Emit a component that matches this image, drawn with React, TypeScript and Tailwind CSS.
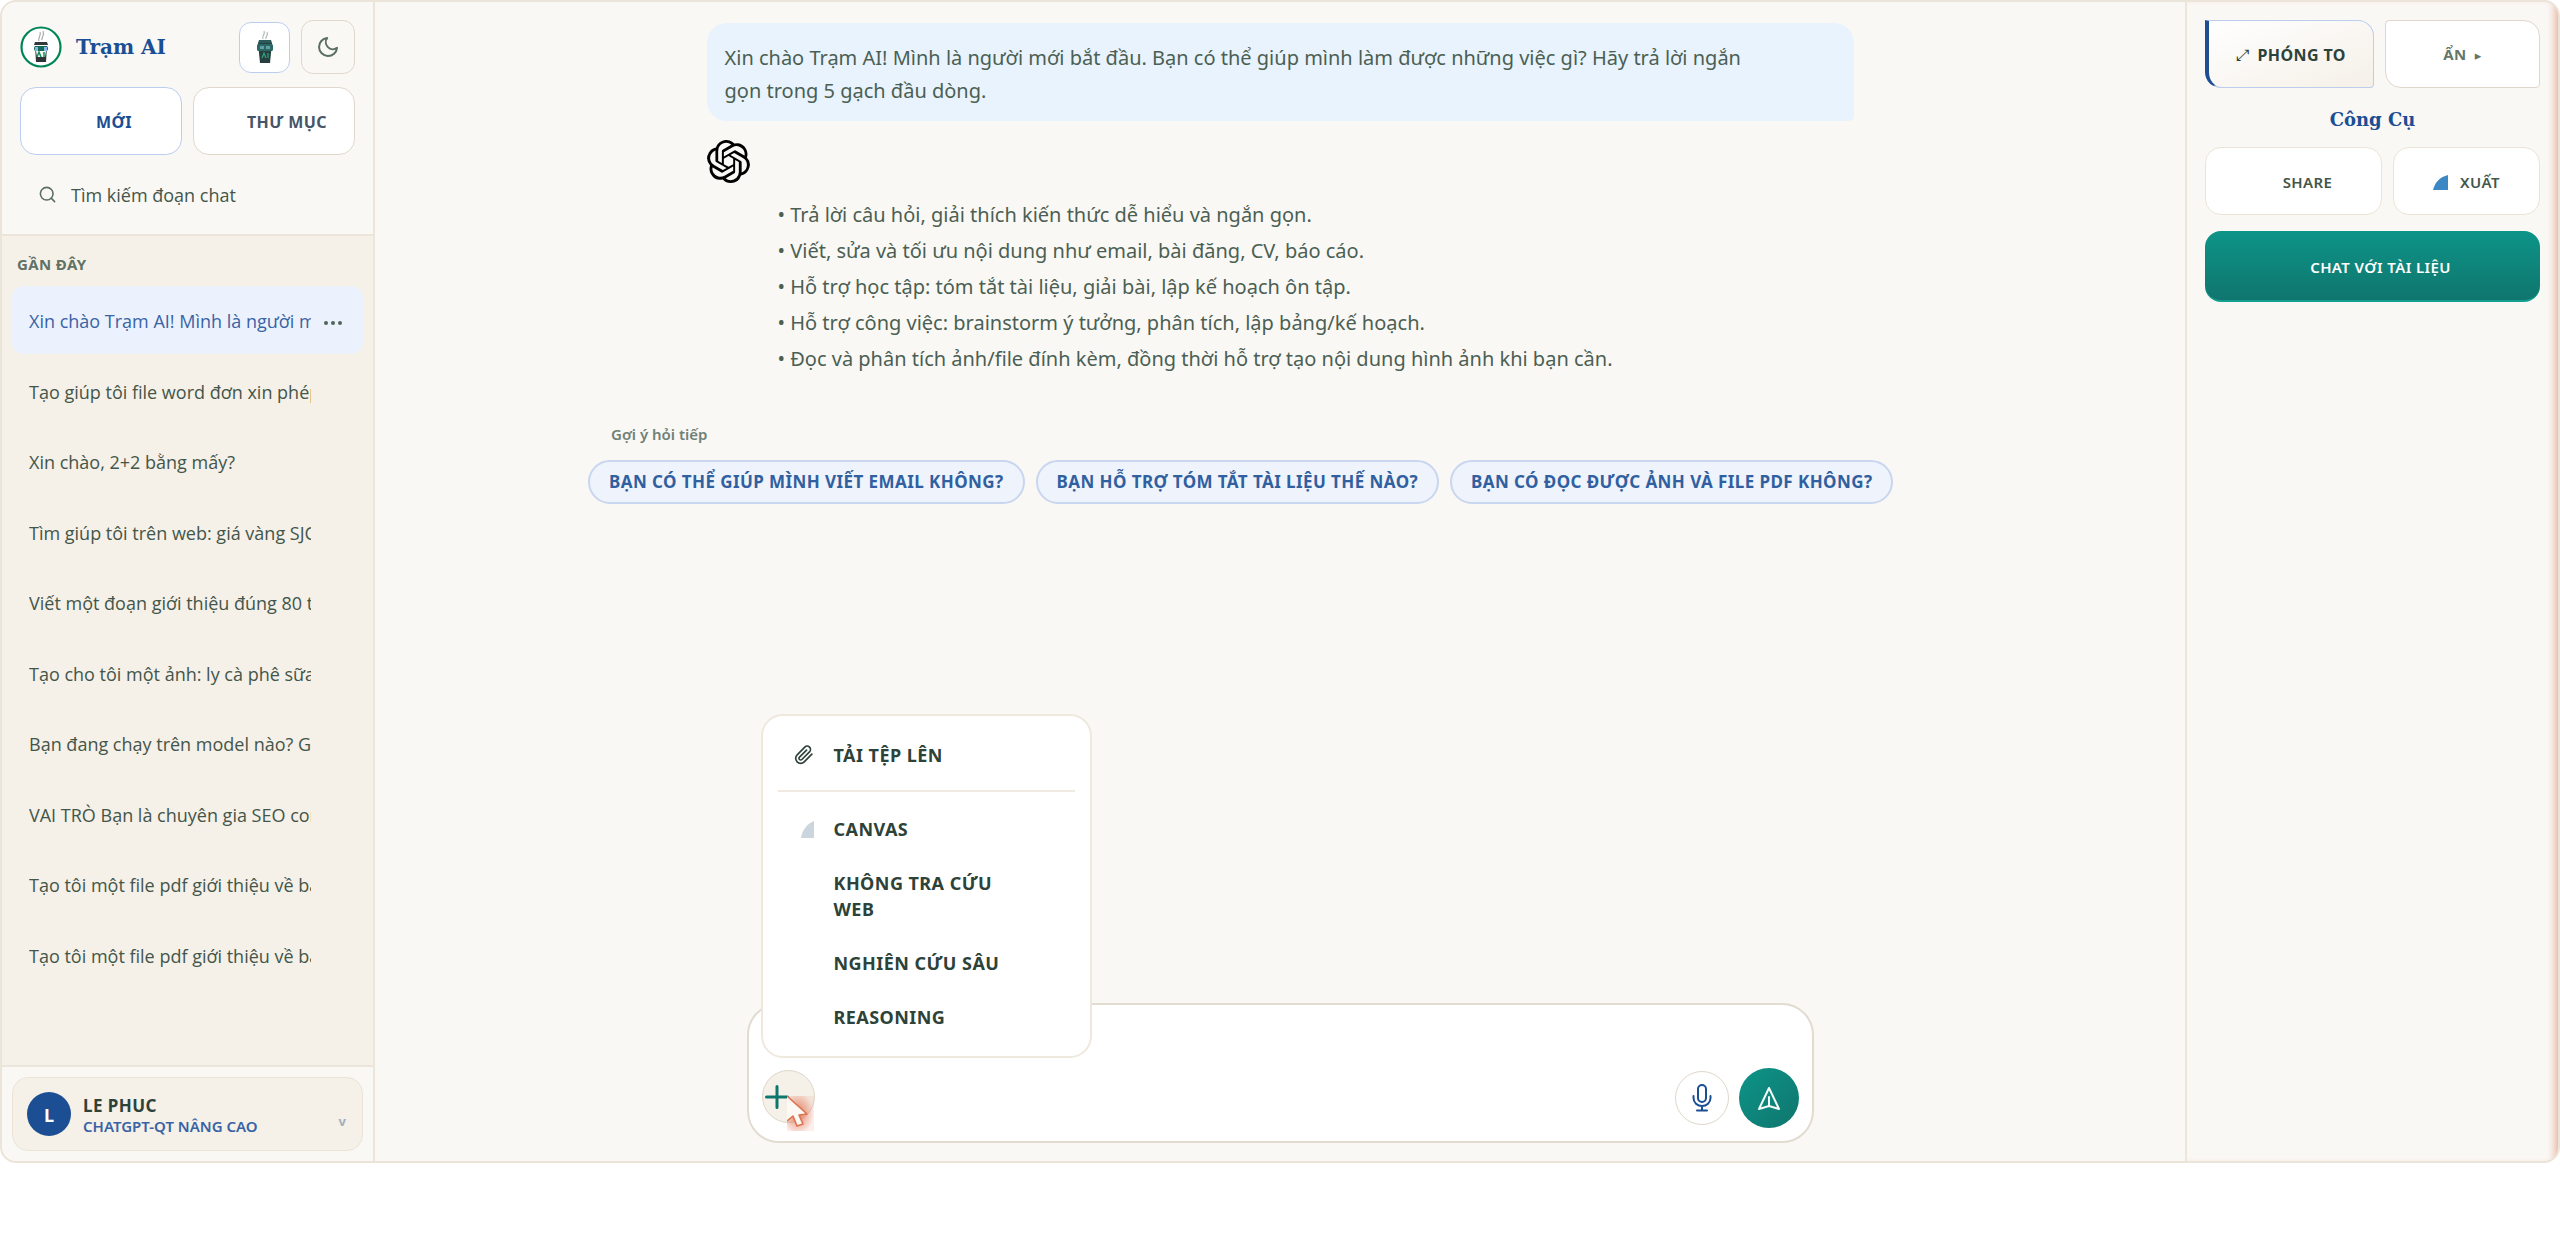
import { type FC, type ReactNode } from "react";
import { FiMoon, FiPaperclip, FiSearch } from "react-icons/fi";
import { SiOpenai } from "react-icons/si";

type ChildrenProps = { children: ReactNode };

const chats = [
  "Xin chào Trạm AI! Mình là người mới bắt đầu",
  "Tạo giúp tôi file word đơn xin phép nghỉ",
  "Xin chào, 2+2 bằng mấy?",
  "Tìm giúp tôi trên web: giá vàng SJC hôm nay",
  "Viết một đoạn giới thiệu đúng 80 từ",
  "Tạo cho tôi một ảnh: ly cà phê sữa đá",
  "Bạn đang chạy trên model nào? Giới thiệu",
  "VAI TRÒ Bạn là chuyên gia SEO content",
  "Tạo tôi một file pdf giới thiệu về bản thân",
  "Tạo tôi một file pdf giới thiệu về bản thân",
];

const answers = [
  "Trả lời câu hỏi, giải thích kiến thức dễ hiểu và ngắn gọn.",
  "Viết, sửa và tối ưu nội dung như email, bài đăng, CV, báo cáo.",
  "Hỗ trợ học tập: tóm tắt tài liệu, giải bài, lập kế hoạch ôn tập.",
  "Hỗ trợ công việc: brainstorm ý tưởng, phân tích, lập bảng/kế hoạch.",
  "Đọc và phân tích ảnh/file đính kèm, đồng thời hỗ trợ tạo nội dung hình ảnh khi bạn cần.",
];

const suggestions = [
  "BẠN CÓ THỂ GIÚP MÌNH VIẾT EMAIL KHÔNG?",
  "BẠN HỖ TRỢ TÓM TẮT TÀI LIỆU THẾ NÀO?",
  "BẠN CÓ ĐỌC ĐƯỢC ẢNH VÀ FILE PDF KHÔNG?",
];

const Cup: FC<{ className: string }> = ({ className }) => (
  <svg viewBox="0 0 20 36" className={className} fill="none" aria-hidden="true">
    <path d="M8 10c-2-3 3-4 1-8M11 10c-1-3 3-3 1-7" stroke="#aeb9b7" strokeWidth="1.2" />
    <path d="M4 11h12l1 3H3z" fill="#2c5a5a" />
    <path d="M3 14h14l-2 20H5z" fill="#26403f" />
    <path d="M2 17c0-2 1-2 2-2h12c1 0 2 0 2 2v3c0 2-1 2-2 2H4c-1 0-2 0-2-2z" fill="#2b6763" />
    <path d="M5 17h4v3H5zM11 17h4v3h-4z" fill="#5f9fa5" />
    <path d="M7 29l2-5 2 5M13 24v5" stroke="#2fa37e" strokeWidth="1.2" />
  </svg>
);

const Logo = () => (
  <svg viewBox="0 0 42 42" className="size-[42px]" fill="none" aria-hidden="true">
    <circle cx="21" cy="21" r="19.5" fill="#fff" stroke="#008556" strokeWidth="2.2" />
    <path d="M19 15c-2-3 3-5 1-9M22 14c-1-3 3-4 1-9" stroke="#a9a9a9" strokeWidth="1.2" />
    <path d="M15 16h12l1 3H14z" fill="#33383b" />
    <path d="M15 20h12l-1 16H16z" fill="#2d3336" />
    <rect x="14" y="20" width="14" height="5" rx="2" fill="#186a58" />
    <path d="M15 21h3v4h-3zM24 21h3v4h-3z" fill="#86b6ea" />
    <path d="M16 25h10l-1 6h-8z" fill="#f4f7f5" />
    <path d="M17 31l2-5 2 5M24 26v5" stroke="#168a5c" strokeWidth="1.5" />
  </svg>
);

const MenuItem: FC<ChildrenProps & { icon?: ReactNode }> = ({ icon, children }) => (
  <button type="button" role="menuitem" className="flex w-full items-center gap-5 px-4 py-[14px] text-left text-[18px] leading-[26px] font-bold tracking-wide text-[#2d4238]">
    <span className="flex w-5 shrink-0 justify-end">{icon}</span>
    <span className="max-w-[200px]">{children}</span>
  </button>
);

const Sidebar = () => (
  <aside className="flex w-[373px] shrink-0 flex-col border-r-2 border-[#ebe5da]">
    <div className="flex h-[234px] flex-col border-b-2 border-[#ebe5da] px-[18px] pt-[18px]">
      <div className="flex h-[54px] items-center">
        <Logo />
        <h1 className="ml-[14px] flex-1 font-['DejaVu_Serif','Liberation_Serif',serif] text-[20px] font-bold text-[#1b4e93]">Trạm AI</h1>
        <button type="button" aria-label="Trạm AI" className="mr-[11px] flex size-[51px] items-center justify-center rounded-xl border border-[#bccdee] bg-white">
          <Cup className="h-9 w-5" />
        </button>
        <button type="button" aria-label="Giao diện tối" className="flex size-[54px] items-center justify-center rounded-xl border border-[#dfd7c9]">
          <FiMoon size={24} className="text-[#5a6e62]" />
        </button>
      </div>
      <div className="mt-[13px] grid grid-cols-2 gap-[11px] text-base font-bold">
        <button type="button" className="h-[68px] rounded-2xl border border-[#bccdee] bg-white pt-[2px] pl-[26px] tracking-wide text-[#1b4e93]">MỚI</button>
        <button type="button" className="h-[68px] rounded-2xl border border-[#dfd7c9] bg-white pt-[2px] pl-[26px] tracking-wide text-[#475569]">THƯ MỤC</button>
      </div>
      <label className="mt-[25px] flex items-center pl-[18px]">
        <FiSearch size={19} className="text-[#5a6e62]" />
        <input
          type="search"
          placeholder="Tìm kiếm đoạn chat"
          className="ml-[14px] w-60 bg-transparent pt-[2px] font-['Open_Sans',sans-serif] text-[18px] text-[#43564a] outline-none placeholder:text-[#43564a]"
        />
      </label>
    </div>
    <nav className="flex-1 bg-[#f5f0e8] px-[10px] pt-4">
      <h2 className="pl-[5px] text-[15px] leading-6 font-bold tracking-wide text-[#5f7266]">GẦN ĐÂY</h2>
      <ul className="mt-[10px] flex h-[703px] flex-col justify-between">
        {chats.map((chat, i) => (
          <li
            key={i}
            className={i === 0 ? "flex h-[68px] items-center rounded-xl bg-[#ebf2fd] pt-[2px] pl-[17px] text-[#3963a5]" : "flex h-[68px] items-center pt-[2px] pl-[17px] text-[#43564a]"}
          >
            <a href="#" className="w-[282px] overflow-hidden font-['Open_Sans',sans-serif] text-[18px] leading-7 whitespace-nowrap">{chat}</a>
            {i === 0 && (
              <button type="button" aria-label="Tùy chọn" className="ml-[13px] flex gap-[3px] pt-1">
                <span className="size-1 rounded-full bg-[#52655a]" />
                <span className="size-1 rounded-full bg-[#52655a]" />
                <span className="size-1 rounded-full bg-[#52655a]" />
              </button>
            )}
          </li>
        ))}
      </ul>
    </nav>
    <div className="border-t-2 border-[#ebe5da] p-[10px]">
      <button type="button" className="flex h-[74px] w-full items-center rounded-2xl border border-[#ebe4d6] bg-[#f5f0e8] pr-4 pl-[14px] text-left">
        <span className="flex size-11 items-center justify-center rounded-full bg-[#1b4e93] pt-[2px] text-[18px] font-bold text-white">L</span>
        <span className="ml-3 flex-1 pt-1">
          <span className="block text-[17px] leading-5 font-bold tracking-wide text-[#2d4238]">LE PHUC</span>
          <span className="block text-[15px] leading-5 font-semibold text-[#3963a5]">CHATGPT-QT NÂNG CAO</span>
        </span>
        <span className="pt-4 text-[13px] font-bold text-[#a3aebb]">v</span>
      </button>
    </div>
  </aside>
);

const AddMenu = () => (
  <div role="menu" className="absolute bottom-[83px] left-3 w-[331px] rounded-[22px] border-2 border-[#eee8dd] bg-white px-[15px] py-3">
    <MenuItem icon={<FiPaperclip size={22} />}>TẢI TỆP LÊN</MenuItem>
    <hr className="mt-2 mb-[10px] border-t-2 border-[#f0eae3]" />
    <MenuItem
      icon={
        <svg viewBox="0 0 13 17" className="h-[17px] w-[13px]" fill="#cbd5dd" aria-hidden="true">
          <path d="M0 17C1 9 6 3 13 0v17z" />
        </svg>
      }
    >
      CANVAS
    </MenuItem>
    <MenuItem>KHÔNG TRA CỨU WEB</MenuItem>
    <MenuItem>NGHIÊN CỨU SÂU</MenuItem>
    <MenuItem>REASONING</MenuItem>
  </div>
);

const Composer = () => (
  <form className="relative mx-auto mt-auto mb-[18px] flex h-[140px] w-full max-w-[1067px] items-end rounded-[32px] border-2 border-[#e2dbd0] bg-white px-[13px] pb-[13px]">
    <AddMenu />
    <button type="button" aria-label="Thêm" className="relative mb-[5px] flex size-[53px] items-center rounded-full border border-[#ddd6c9] bg-[#f5f0e8] pl-[2px]">
      <svg viewBox="0 0 24 24" className="size-6" fill="none" stroke="#0f766e" strokeWidth="3" strokeLinecap="round" aria-hidden="true">
        <path d="M1.5 12h21M12 1.5v21" />
      </svg>
      <svg viewBox="0 0 27 35" className="absolute top-[25px] left-6 h-[35px] w-[27px]" fill="none" aria-hidden="true">
        <defs>
          <radialGradient id="pointerGlow" cx="0.4" cy="0.5" r="0.6">
            <stop offset="0" stopColor="#e2603f" stopOpacity="0.8" />
            <stop offset="1" stopColor="#e2603f" stopOpacity="0.1" />
          </radialGradient>
        </defs>
        <rect width="27" height="35" fill="url(#pointerGlow)" />
        <path d="M0 0L20 18l-8 1 4 9-6 2-4-10-6 5z" fill="#fcf8f3" />
        <path d="M0 0L20 18l-8 1 4 9-6 2-4-10-6 5" stroke="#dc7350" strokeWidth="1.6" strokeLinejoin="round" />
      </svg>
    </button>
    <textarea aria-label="Tin nhắn" className="h-28 flex-1 resize-none bg-transparent outline-none" />
    <button type="button" aria-label="Ghi âm" className="mr-[10px] mb-[3px] flex size-[54px] items-center justify-center rounded-full border border-[#dfd7c9]">
      <svg viewBox="0 0 20 28" className="h-7 w-5" fill="none" stroke="#1b4e93" strokeWidth="2" strokeLinecap="round" aria-hidden="true">
        <rect x="6" y="1" width="8" height="17" rx="4" />
        <path d="M1.5 12v2a8.5 8 0 0 0 17 0v-2M10 22v4.5M5 26.5h10" />
      </svg>
    </button>
    <button type="submit" aria-label="Gửi" className="flex size-[60px] items-center justify-center rounded-full bg-linear-to-br from-[#0d9488] to-[#0f766e]">
      <svg viewBox="0 0 24 24" className="size-6" fill="none" stroke="#f3fbf8" strokeWidth="2" strokeLinejoin="round" strokeLinecap="round" aria-hidden="true">
        <path d="M12 2l10 21-10-3-10 3zM12 11v9" />
      </svg>
    </button>
  </form>
);

const Chat = () => (
  <main className="flex min-w-0 flex-1 flex-col pt-[21px] text-[20px] text-[#4b5f53]">
    <section className="mx-auto w-full max-w-[1147px]">
      <p className="rounded-[20px] rounded-br-[5px] bg-[#e8f3fd] pt-[18px] pr-[90px] pb-[14px] pl-[18px] leading-[33px]">
        Xin chào Trạm AI! Mình là người mới bắt đầu. Bạn có thể giúp mình làm được những việc gì? Hãy trả lời ngắn gọn trong 5 gạch đầu dòng.
      </p>
      <SiOpenai size={43} className="mt-[19px] text-black" />
      <ul className="mt-[14px] pl-[71px] leading-9">
        {answers.map((answer) => (
          <li key={answer}>• {answer}</li>
        ))}
      </ul>
    </section>
    <section className="mt-[45px] ml-[213px]">
      <h2 className="pl-[23px] text-[15px] leading-6 font-semibold text-[#6f8176]">Gợi ý hỏi tiếp</h2>
      <div className="mt-[14px] flex gap-[11px]">
        {suggestions.map((text) => (
          <button key={text} type="button" className="h-11 rounded-full border-2 border-[#c8d6ef] bg-[#eff3fc] px-[19px] text-[17px] font-bold tracking-wide whitespace-nowrap text-[#30609f]">
            {text}
          </button>
        ))}
      </div>
    </section>
    <Composer />
  </main>
);

const Tools = () => (
  <aside className="w-[373px] shrink-0 border-l-2 border-[#ebe5da] px-[18px] pt-[18px] font-semibold tracking-wide shadow-[inset_-8px_0_10px_-6px_#e3a48c]">
    <div className="flex gap-[11px]">
      <button type="button" className="h-[68px] w-[169px] rounded-tr-2xl rounded-br-sm rounded-bl-2xl border border-l-4 border-[#bccdee] border-l-[#1b4e93] bg-linear-to-br from-white to-[#f5f0e8] pt-[2px] text-base font-bold text-[#2d4238]">
        <span className="mr-2 font-['DejaVu_Sans',sans-serif] font-normal">⤢</span>PHÓNG TO
      </button>
      <button type="button" className="h-[68px] flex-1 rounded-tl-sm rounded-tr-2xl rounded-br-sm rounded-bl-2xl border border-[#dfd7c9] bg-white text-[15px] font-bold text-[#65766b]">
        ẨN<span className="ml-2 font-['DejaVu_Sans',sans-serif] text-[13px]">▸</span>
      </button>
    </div>
    <h2 className="mt-[18px] text-center font-['DejaVu_Serif','Liberation_Serif',serif] text-[18px] leading-7 font-bold tracking-normal text-[#1b4e93]">Công Cụ</h2>
    <div className="mt-[13px] flex gap-[11px] text-[15px] text-[#43564a]">
      <button type="button" className="h-[68px] w-[177px] rounded-2xl border border-[#ebe4d6] bg-white pt-[2px] pl-7">SHARE</button>
      <button type="button" className="flex h-[68px] flex-1 items-center justify-center gap-3 rounded-2xl border border-[#ebe4d6] bg-white pt-[2px]">
        <svg viewBox="0 0 15 15" className="size-[15px]" fill="#3d88c4" aria-hidden="true">
          <path d="M0 15C2 7 7 2 15 0v15z" />
        </svg>
        XUẤT
      </button>
    </div>
    <button type="button" className="mt-4 h-[71px] w-full rounded-2xl border-b-2 border-[#14a090] bg-linear-to-b from-[#0d9488] to-[#0f766e] pt-1 pl-4 text-[15px] text-white">CHAT VỚI TÀI LIỆU</button>
  </aside>
);

const App = () => (
  <div className="bg-white font-['Noto_Sans','Open_Sans',sans-serif]">
    <div className="flex min-h-[1163px] overflow-hidden rounded-2xl border-2 border-[#ebe4d8] bg-[#faf8f5]">
      <Sidebar />
      <Chat />
      <Tools />
    </div>
  </div>
);

export default App;
